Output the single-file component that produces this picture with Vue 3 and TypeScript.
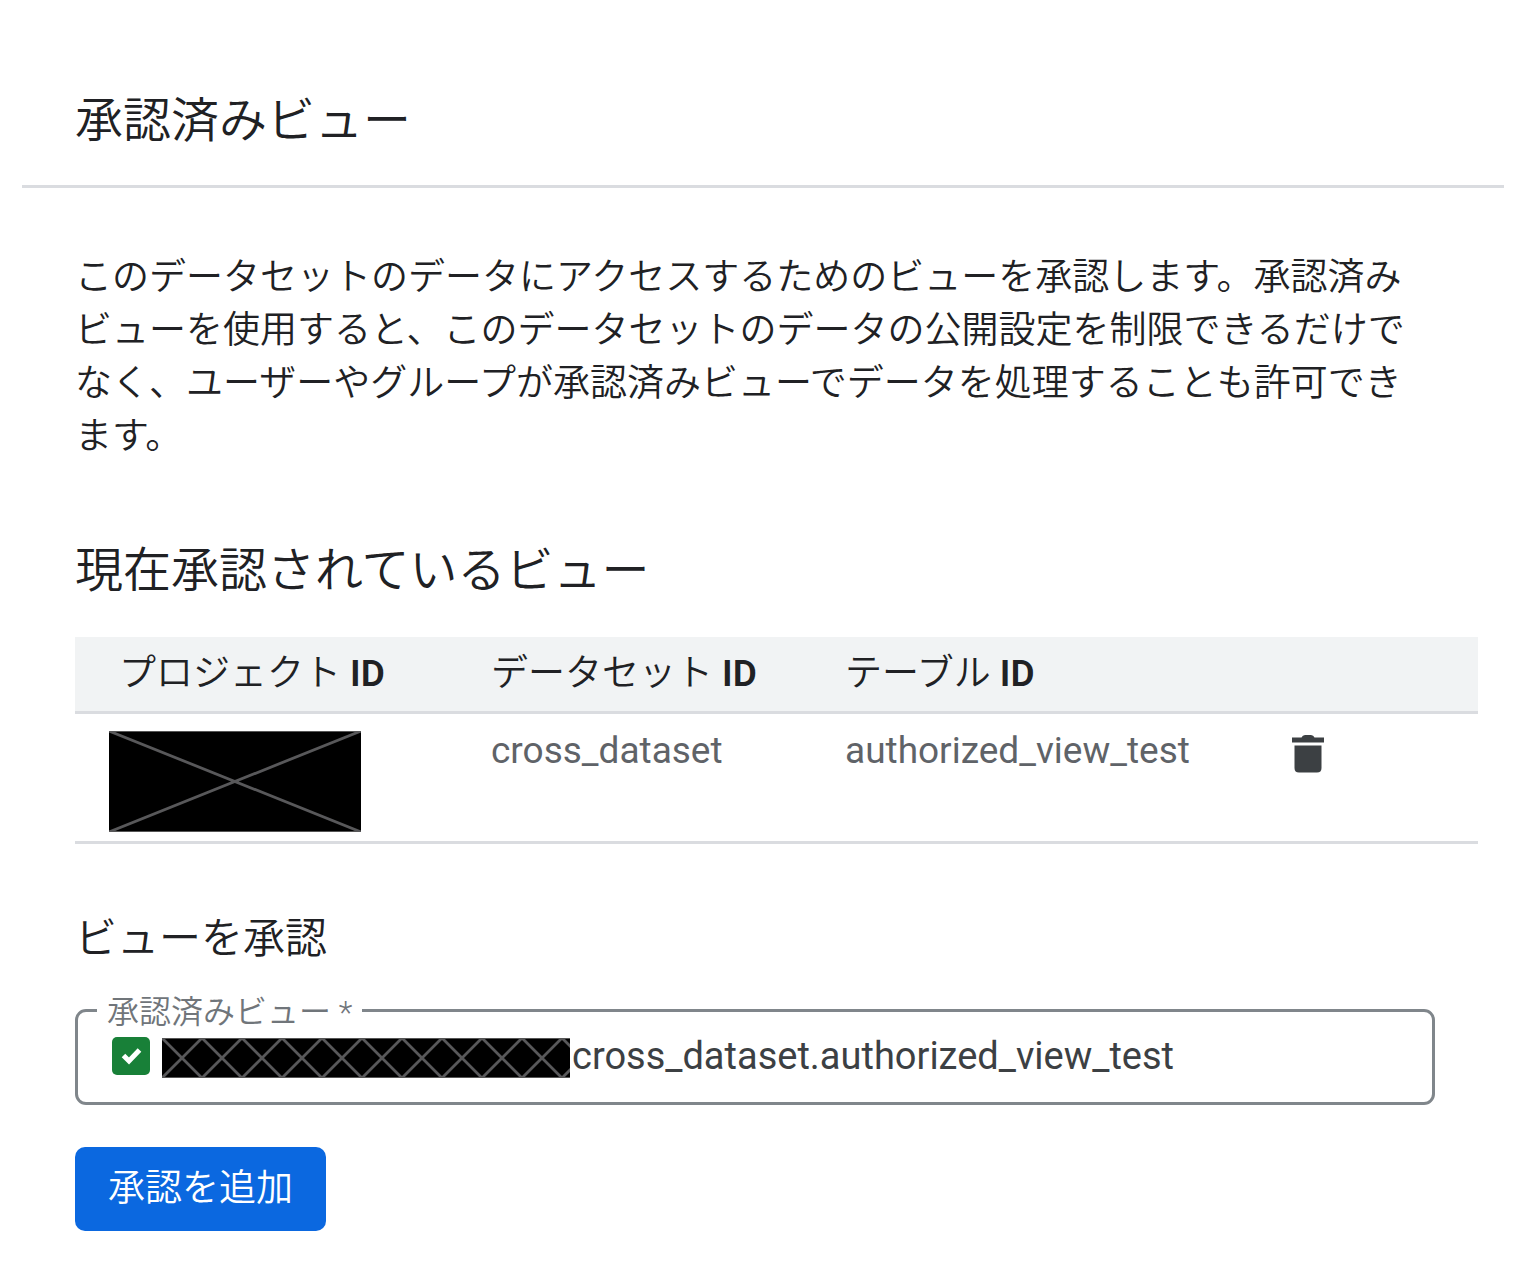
<script setup lang="ts">
import { ref } from 'vue'

interface AuthorizedView {
  dataset: string
  table: string
}

const columns = ['プロジェクト', 'データセット', 'テーブル']
const views = ref<AuthorizedView[]>([
  { dataset: 'cross_dataset', table: 'authorized_view_test' },
])
const target = ref('cross_dataset.authorized_view_test')
const valid = ref(true)
</script>

<template>
  <main class="panel">
    <header class="panel-header">
      <h1>承認済みビュー</h1>
    </header>

    <div class="content">
      <p class="description">
        このデータセットのデータにアクセスするためのビューを承認します。承認済みビューを使用すると、このデータセットのデータの公開設定を制限できるだけでなく、ユーザーやグループが承認済みビューでデータを処理することも許可できます。
      </p>

      <h2>現在承認されているビュー</h2>
      <table>
        <colgroup>
          <col class="col-project" />
          <col class="col-dataset" />
          <col class="col-table" />
          <col />
        </colgroup>
        <thead>
          <tr>
            <th v-for="column in columns" :key="column" scope="col">{{ column }} <b>ID</b></th>
            <td></td>
          </tr>
        </thead>
        <tbody>
          <tr v-for="view in views" :key="view.table">
            <td class="project">
              <svg class="mask" viewBox="0 0 252 101" aria-hidden="true">
                <rect width="252" height="101" fill="#000" />
                <path d="M0 .5H252M0 100.5H252" stroke="#555" stroke-width="1" />
                <path d="M0 0L252 101M252 0L0 101" stroke="#58585a" stroke-width="2.8" />
              </svg>
            </td>
            <td>{{ view.dataset }}</td>
            <td>{{ view.table }}</td>
            <td>
              <button type="button" class="delete" aria-label="削除">
                <svg viewBox="0 0 32 38" aria-hidden="true">
                  <path
                    d="M0 2.5H9.5Q10.500 0 13 0H19Q21.500 0 22.500 2.500H32V7.500H0ZM2.500 10.500H29.500V33Q29.500 37.500 25 37.500H7Q2.500 37.500 2.500 33Z"
                    fill="#3c4043"
                  />
                </svg>
              </button>
            </td>
          </tr>
        </tbody>
      </table>

      <form @submit.prevent>
        <h3>ビューを承認</h3>
        <div class="field">
          <label for="authorized-view">承認済みビュー *</label>
          <span class="check">
            <input v-model="valid" type="checkbox" aria-label="有効" />
            <svg viewBox="0 0 38 38" aria-hidden="true">
              <path d="M11.500 18.500L17 24L27.500 13" fill="none" stroke="#fff" stroke-width="5" />
            </svg>
          </span>
          <svg class="strip" viewBox="0 0 408 40" aria-hidden="true">
            <defs>
              <pattern id="lattice" width="40" height="40" patternUnits="userSpaceOnUse">
                <path d="M-2 -2L42 42M42 -2L-2 42" stroke="#58585a" stroke-width="2.8" />
              </pattern>
            </defs>
            <rect width="408" height="40" fill="#000" />
            <rect width="408" height="40" fill="url(#lattice)" />
            <path d="M0 .5H408M0 39.500H408" stroke="#555" stroke-width="1" />
          </svg>
          <input id="authorized-view" v-model="target" class="text" type="text" required />
        </div>
        <button type="submit" class="submit">承認を追加</button>
      </form>
    </div>
  </main>
</template>

<style>
body {
  margin: 0;
  background: #fff;
}
</style>

<style scoped>
.panel {
  box-sizing: border-box;
  padding: 0 26px 42px 22px;
  color: #202124;
  font-family: Roboto, "Noto Sans CJK JP", sans-serif;
  font-size: 37px;
  font-weight: 350;
}

h1,
h2,
h3,
p {
  margin: 0;
  font-weight: 350;
}

.panel-header {
  padding: 89px 53px 32px;
  border-bottom: 3px solid #dadce0;
}

h1,
h2 {
  font-size: 48px;
  line-height: 64px;
}

.content {
  padding: 63px 26px 0 53px;
}

.description {
  margin-right: 43px;
  line-height: 53px;
}

h2 {
  margin-top: 76px;
}

table {
  width: 100%;
  margin-top: 34px;
  border-collapse: separate;
  border-spacing: 0;
  table-layout: fixed;
}

.col-project {
  width: 416px;
}

.col-dataset {
  width: 354px;
}

.col-table {
  width: 447px;
}

th,
td {
  padding: 0;
  border-bottom: 3px solid #dadce0;
  text-align: left;
  vertical-align: top;
  white-space: nowrap;
}

thead th,
thead td {
  height: 74px;
  background: #f1f3f4;
  font-weight: 350;
  line-height: 74px;
}

th b {
  font-weight: 600;
}

th:first-child {
  padding-left: 44px;
}

tbody td {
  padding: 17px 0 9px;
  color: #5f6368;
  font-weight: 400;
  line-height: 40px;
}

tbody td.project {
  padding-left: 34px;
}

.mask {
  display: block;
  width: 252px;
  height: 101px;
}

button {
  border: 0;
  font: inherit;
  cursor: pointer;
}

.delete {
  display: block;
  margin-top: 4px;
  padding: 0;
  background: none;
}

.delete svg {
  display: block;
  width: 32px;
  height: 38px;
}

form {
  margin-right: 43px;
}

h3 {
  margin-top: 67px;
  font-size: 42px;
  line-height: 56px;
}

.field {
  position: relative;
  display: flex;
  align-items: center;
  box-sizing: border-box;
  height: 96px;
  margin-top: 42px;
  padding: 2px 32px 4px 34px;
  border: 3px solid #80868b;
  border-radius: 11px;
}

.field label {
  position: absolute;
  top: -22px;
  left: 19px;
  padding: 0 10px;
  background: #fff;
  color: #70757a;
  font-size: 32px;
  line-height: 44px;
}

.check {
  display: grid;
  flex: none;
  width: 38px;
  height: 38px;
  margin-right: 12px;
}

.check input,
.check svg {
  grid-area: 1 / 1;
  width: 38px;
  height: 38px;
  margin: 0;
}

.check input {
  appearance: none;
  border-radius: 5px;
  background: #188038;
}

.check svg {
  pointer-events: none;
}

.strip {
  flex: none;
  width: 408px;
  height: 40px;
  margin-top: 4px;
}

.text {
  flex: 1;
  min-width: 0;
  padding: 0 0 0 2px;
  border: 0;
  outline: 0;
  background: none;
  color: #3c4043;
  font: inherit;
  font-size: 38px;
  font-weight: 400;
  line-height: 44px;
}

.submit {
  display: block;
  margin-top: 42px;
  padding: 0 33px;
  border-radius: 10px;
  background: #0b68e0;
  color: #fff;
  line-height: 84px;
}
</style>
